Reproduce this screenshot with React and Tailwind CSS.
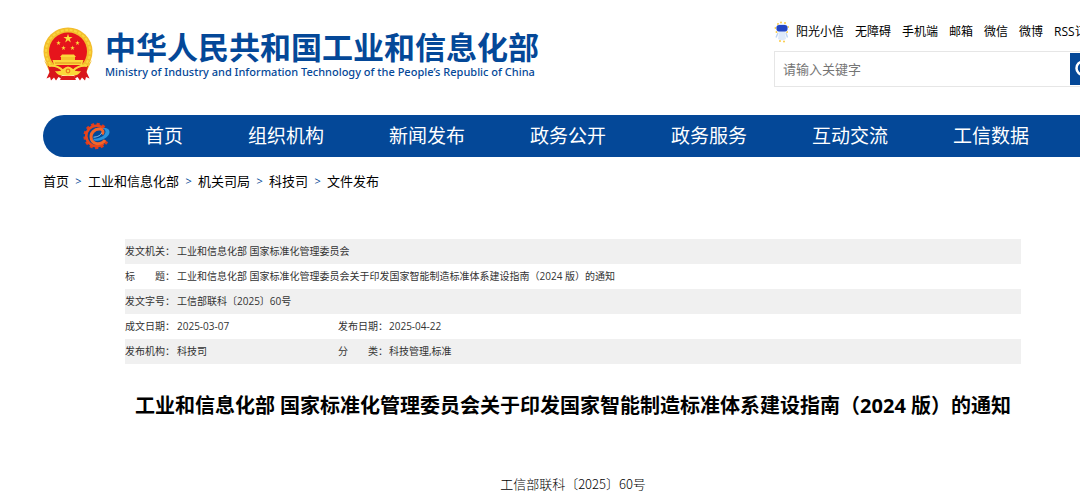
import React, { useState } from 'react';
import { Search } from 'lucide-react';

const TOP_LINKS = ['无障碍', '手机端', '邮箱', '微信', '微博', 'RSS订阅'];

const NAV_ITEMS = ['首页', '组织机构', '新闻发布', '政务公开', '政务服务', '互动交流', '工信数据'];

const CRUMBS = ['首页', '工业和信息化部', '机关司局', '科技司', '文件发布'];

const STAR = 'M0 -1 L0.225 -0.309 L0.951 -0.309 L0.363 0.118 L0.588 0.809 L0 0.382 L-0.588 0.809 L-0.363 0.118 L-0.951 -0.309 L-0.225 -0.309 Z';

const Emblem = () => (
    <svg viewBox="0 0 50 54" className="w-[50px] h-[54px] shrink-0" aria-hidden="true">
        {/* Wheat wreath */}
        <ellipse cx="25" cy="24.5" rx="24.5" ry="24" fill="#f3bd2c" />
        <ellipse cx="25" cy="24.5" rx="22" ry="21.5" fill="none" stroke="#f9d63e" strokeWidth="2" strokeDasharray="3 1.5" />
        <path d="M1 33 L7 40 L43 40 L49 33 L43 46 L7 46 Z" fill="#f3bd2c" />
        {/* Red disc with the stars */}
        <circle cx="25" cy="24.5" r="19" fill="#e6141c" />
        <g fill="#fbdc3c">
            <path d={STAR} transform="translate(25 11.5) scale(4.8)" />
            <path d={STAR} transform="translate(15.5 16) scale(2.4)" />
            <path d={STAR} transform="translate(34.5 16) scale(2.4)" />
            <path d={STAR} transform="translate(20.5 21) scale(2.4)" />
            <path d={STAR} transform="translate(29.5 21) scale(2.4)" />
        </g>
        {/* Gate */}
        <path d="M17 30 L19 27.5 H31 L33 30 Z" fill="#fbd83a" />
        <path d="M18 30 H32 V33 H18 Z" fill="#f5c32e" />
        <path d="M9.5 33 H40.5 L39 38 H11 Z" fill="#fbd83a" />
        <path d="M12 36 H38" stroke="#dc7a1c" strokeWidth="0.8" />
        {/* Ribbons and cogwheel */}
        <path d="M5 39 Q12 37 18 42 L19 52 L15.5 50 L13 53.5 L11 50.5 L8 53.5 L7 50 L3.5 51.5 L6.5 45 Z" fill="#d9161b" />
        <path d="M45 39 Q38 37 32 42 L31 52 L34.5 50 L37 53.5 L39 50.5 L42 53.5 L43 50 L46.5 51.5 L43.5 45 Z" fill="#d9161b" />
        <path d="M6 39 Q15 38 20 44 M44 39 Q35 38 30 44" stroke="#fbd83a" strokeWidth="2" fill="none" />
        <path d="M12 44 Q18 45 20 42 Q25 37 30 42 Q32 45 38 44 Q35 49 30 48.5 H20 Q15 49 12 44 Z" fill="#fbd83a" />
        <circle cx="25" cy="44" r="2.4" fill="#ee7a1e" />
        <circle cx="25" cy="44" r="1.2" fill="#fbd83a" />
        <path d="M19 49 H31 L33 53 H17 Z" fill="#dc1a1c" />
    </svg>
);

const Mascot = () => (
    <svg viewBox="0 0 16 22" className="w-4 h-[22px] shrink-0" aria-hidden="true">
        <g fill="#fbcb45">
            <circle cx="7" cy="1.5" r="1" />
            <circle cx="11" cy="2" r="1" />
            <circle cx="4" cy="3" r="1" />
            <circle cx="1.5" cy="7" r="1" />
            <circle cx="14" cy="6" r="1" />
            <circle cx="2.5" cy="11" r="1" />
            <circle cx="13" cy="11" r="1" />
            <circle cx="6" cy="20" r="1" />
            <circle cx="10" cy="20.5" r="1" />
        </g>
        <ellipse cx="8" cy="7.5" rx="6" ry="4.8" fill="#dce8fb" />
        <rect x="2.5" y="4" width="11" height="6.4" rx="2.6" fill="#2547c4" />
        <path d="M5 11.5 H11 L12 18 Q8 20.5 4 18 Z" fill="#dfeafa" />
        <path d="M4 12 L2 16.5 M12 12 L13.5 16.5" stroke="#bcd3f4" strokeWidth="1.4" />
    </svg>
);

const TEETH = [35, 62, 89, 116, 143, 170, 197, 224, 251, 278, 305];

const GearLogo = () => (
    <svg viewBox="0 0 28 28" className="w-7 h-7 shrink-0" aria-hidden="true">
        <g fill="#e03c1c">
            {TEETH.map((deg) => (
                <rect key={deg} x="23" y="12.4" width="3.6" height="3.2" transform={`rotate(${deg} 13.5 14)`} />
            ))}
        </g>
        {/* Gear rim, open on the right */}
        <path d="M20.5 6.6 A10.2 10.2 0 1 0 20.5 21.4" fill="none" stroke="#e8451c" strokeWidth="2.6" />
        {/* Letter e inside the rim */}
        <path d="M22 18 C18.5 23 10.5 23 8.5 17.5 C6.5 11 12 6.5 17 7 C20 7.4 21 10 19 12.3" fill="none" stroke="#f4662a" strokeWidth="3" />
        <path d="M10.5 16.6 C17 17 22.5 13.5 22.5 9.5 C22.5 7.8 21 6.8 19.5 6.4 C23 5.4 26.8 7 26.5 10.4 C26 15.6 17 19.6 10.5 18.6 Z" fill="#2b93dc" />
        <path d="M10.5 15.2 C14.5 15 18 13.2 18.6 10.8" fill="none" stroke="#8fc8f0" strokeWidth="1" />
    </svg>
);

// Two spaced characters fill the same width as a four character label
const Label = ({ children }) => (
    <span className="flex w-10 justify-between">
        {children.length === 2 ? [...children].map((c) => <span key={c}>{c}</span>) : children}
    </span>
);

const Th = ({ children }) => (
    <th scope="row" className="p-0 text-left font-normal">
        <span className="flex">
            <Label>{children}</Label>：
        </span>
    </th>
);

const App = () => {
    const [keyword, setKeyword] = useState('');

    return (
        <div lang="zh-CN" className="overflow-x-hidden bg-white pt-[21px] pl-[43px] text-black font-['Open_Sans','Noto_Sans_CJK_SC',sans-serif]">
            {/* Header */}
            <header className="flex items-start justify-between">
                <a href="#" className="flex items-start gap-3 pt-1.5 text-[#044898]">
                    <Emblem />
                    <span className="flex flex-col pt-px whitespace-nowrap">
                        <span className="text-[31px] leading-[38px] font-bold">中华人民共和国工业和信息化部</span>
                        <span className="text-[11px] leading-3 font-medium font-['Noto_Sans',sans-serif]">
                            Ministry of Industry and Information Technology of the People’s Republic of China
                        </span>
                    </span>
                </a>
                <div className="w-[306px] shrink-0 overflow-hidden">
                    <nav className="flex items-center gap-[11px] text-xs leading-[22px] whitespace-nowrap">
                        <a href="#" className="flex items-center gap-1.5">
                            <Mascot />
                            阳光小信
                        </a>
                        {TOP_LINKS.map((link) => (
                            <a key={link} href="#">{link}</a>
                        ))}
                    </nav>
                    <form className="mt-2 flex h-9 items-center border border-r-0 border-[#e6e6e6]" onSubmit={(e) => e.preventDefault()}>
                        <input
                            type="text"
                            aria-label="请输入关键字"
                            placeholder="请输入关键字"
                            value={keyword}
                            onChange={(e) => setKeyword(e.target.value)}
                            className="w-[295px] shrink-0 px-2 pt-0.5 text-[13px] outline-none placeholder:text-[#757575]"
                        />
                        <button type="submit" aria-label="搜索" className="flex h-8 w-10 shrink-0 items-center bg-[#044898] pl-1 text-white">
                            <Search size={20} strokeWidth={3} />
                        </button>
                    </form>
                </div>
            </header>

            {/* Main navigation */}
            <nav className="mt-7 flex h-[42px] items-center rounded-l-full bg-[#044898] pl-10 text-[19px] whitespace-nowrap text-white">
                <GearLogo />
                <ul className="flex gap-[65px] pl-[34px]">
                    {NAV_ITEMS.map((item) => (
                        <li key={item}>
                            <a href="#">{item}</a>
                        </li>
                    ))}
                </ul>
            </nav>

            {/* Breadcrumb */}
            <ol className="mt-[11px] flex text-[13px] leading-[26px]">
                {CRUMBS.map((crumb, i) => (
                    <li key={crumb} className="flex">
                        {i > 0 && <span className="w-[19px] text-center text-[11px] text-[#044898]">&gt;</span>}
                        <a href="#">{crumb}</a>
                    </li>
                ))}
            </ol>

            <main className="pt-[45px] pr-[59px] pl-[82px]">
                {/* Document details */}
                <table className="w-full table-fixed text-[10px] leading-[25px] text-[#333]">
                    <colgroup>
                        <col className="w-[52px]" />
                        <col className="w-[161px]" />
                        <col className="w-[51px]" />
                        <col />
                    </colgroup>
                    <tbody>
                        <tr className="bg-[#f0f0f0]">
                            <Th>发文机关</Th>
                            <td colSpan={3} className="p-0">工业和信息化部 国家标准化管理委员会</td>
                        </tr>
                        <tr>
                            <Th>标题</Th>
                            <td colSpan={3} className="p-0">工业和信息化部 国家标准化管理委员会关于印发国家智能制造标准体系建设指南（2024 版）的通知</td>
                        </tr>
                        <tr className="bg-[#f0f0f0]">
                            <Th>发文字号</Th>
                            <td colSpan={3} className="p-0">工信部联科〔2025〕60号</td>
                        </tr>
                        <tr>
                            <Th>成文日期</Th>
                            <td className="p-0">2025-03-07</td>
                            <Th>发布日期</Th>
                            <td className="p-0">2025-04-22</td>
                        </tr>
                        <tr className="bg-[#f0f0f0]">
                            <Th>发布机构</Th>
                            <td className="p-0">科技司</td>
                            <Th>分类</Th>
                            <td className="p-0">科技管理,标准</td>
                        </tr>
                    </tbody>
                </table>

                <h1 className="mt-[26px] text-center text-xl leading-8 font-bold whitespace-nowrap">
                    工业和信息化部 国家标准化管理委员会关于印发国家智能制造标准体系建设指南（2024 版）的通知
                </h1>
                <p className="mt-[50px] text-center text-[13px] leading-6 font-light font-['Noto_Sans_CJK_SC',sans-serif]">
                    工信部联科〔2025〕60号
                </p>
            </main>
        </div>
    );
};

export default App;
